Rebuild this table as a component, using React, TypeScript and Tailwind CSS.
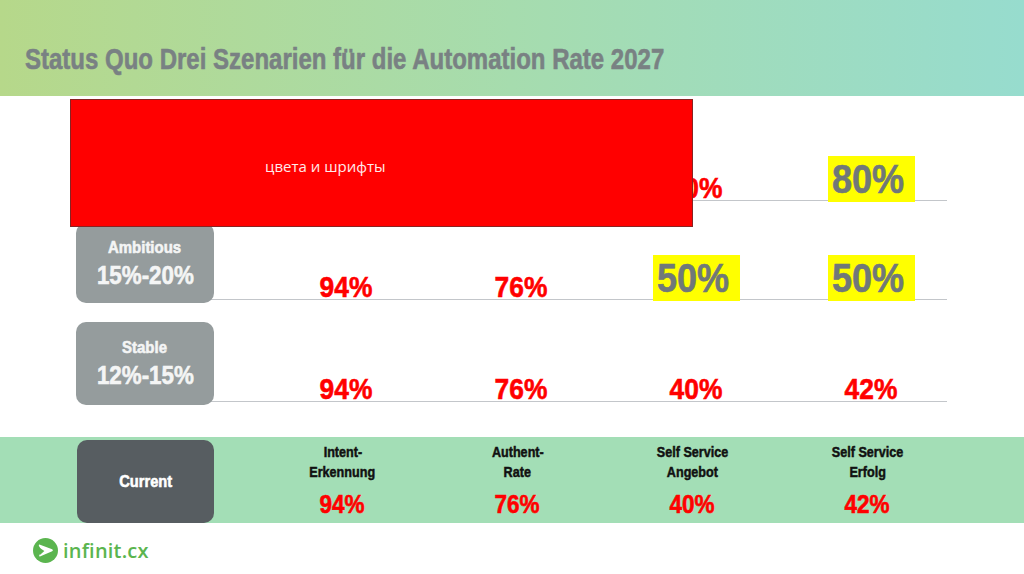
import React from 'react'

type Cell = { v: string; hi?: boolean }

// erste Zeile liegt unter dem roten Hinweisfeld
const rows: { name: string; range: string; h: string; cells: Cell[] }[] = [
  { name: '', range: '', h: 'h-[80px]', cells: [{ v: '' }, { v: '' }, { v: '40%' }, { v: '80%', hi: true }] },
  { name: 'Ambitious', range: '15%-20%', h: 'h-[80px]', cells: [{ v: '94%' }, { v: '76%' }, { v: '50%', hi: true }, { v: '50%', hi: true }] },
  { name: 'Stable', range: '12%-15%', h: 'h-[83px]', cells: [{ v: '94%' }, { v: '76%' }, { v: '40%' }, { v: '42%' }] },
]

const current = [
  { l1: 'Intent-', l2: 'Erkennung', v: '94%' },
  { l1: 'Authent-', l2: 'Rate', v: '76%' },
  { l1: 'Self Service', l2: 'Angebot', v: '40%' },
  { l1: 'Self Service', l2: 'Erfolg', v: '42%' },
]

function Logo() {
  return (
    <div className="flex items-center gap-[5px]">
      <svg width="25" height="25" viewBox="0 0 24 24">
        <circle cx="12" cy="12" r="12" fill="#5bb54f" />
        <path d="M5.6 7.4 Q5.4 6 6.8 6.4 L18.4 10.9 Q20 11.8 18.4 12.8 L7.2 17.6 Q5.6 18.2 6 16.6 L8.4 12.2 Z" fill="#fff" />
        <path d="M5.2 8.6 L10.9 12.4 L6.6 16.4 Z" fill="#5bb54f" />
      </svg>
      <span className="font-['Open_Sans',sans-serif] text-[20px] font-semibold leading-none tracking-[0.2px] text-[#5bb54f]">
        infinit.cx
      </span>
    </div>
  )
}

const heavy = 'font-bold leading-none [-webkit-text-stroke:0.6px_currentColor]'

export default function App() {
  return (
    <div className="relative h-[574px] w-[1024px] overflow-hidden bg-white font-['Liberation_Sans',Arial,sans-serif]">
      {/* Kopfzeile */}
      <div className="flex h-[96px] items-center bg-linear-to-r from-[#b6d88a] via-[#a6dcae] to-[#97dcce] pl-[25px] pt-[21px]">
        <h1 className={`inline-block origin-left scale-x-[0.8] whitespace-nowrap text-[30px] text-[#798183] ${heavy}`}>
          Status Quo Drei Szenarien für die Automation Rate 2027
        </h1>
      </div>

      {/* Szenarien */}
      <div className="flex flex-col gap-[19px] pt-[28px]">
        {rows.map((r, idx) => (
          <div key={idx} className={`flex ${r.h} pl-[76px]`}>
            <div className="relative z-10 flex w-[138px] shrink-0 flex-col items-center justify-center gap-[6px] rounded-[10px] bg-[#959c9d] text-[#f4f5f5]">
              {r.name && <span className={`inline-block scale-x-[0.88] text-[17px] ${heavy}`}>{r.name}</span>}
              {r.range && <span className={`inline-block scale-x-[0.86] text-[26px] ${heavy}`}>{r.range}</span>}
            </div>
            <div className="mb-[3px] ml-[-6px] flex w-[739px] items-end border-b-[1.5px] border-[#c3c6ca] pl-[51px]">
              {r.cells.map((c, i) => (
                <div key={i} className="flex w-[175px] shrink-0 justify-center">
                  {c.hi ? (
                    <div className="mb-[-2px] flex h-[46px] w-[87px] items-center justify-center bg-[#ffff00] pr-[6px]">
                      <span className={`inline-block scale-x-[0.88] text-[41px] text-[#707879] ${heavy}`}>{c.v}</span>
                    </div>
                  ) : (
                    c.v && <span className={`mb-[-3px] inline-block scale-x-[0.88] text-[30px] text-[#ff0000] ${heavy}`}>{c.v}</span>
                  )}
                </div>
              ))}
            </div>
          </div>
        ))}
      </div>

      {/* Current */}
      <div className="mt-[32px] flex h-[86px] bg-[#a3deb6] pl-[77px]">
        <div className="flex h-[83px] w-[137px] shrink-0 items-center justify-center self-end rounded-[10px] bg-[#575d61]">
          <span className={`inline-block scale-x-[0.86] text-[17px] text-white ${heavy}`}>Current</span>
        </div>
        <div className="flex pl-[41px]">
          {current.map((c) => (
            <div key={c.l2} className="flex w-[175px] flex-col items-center pt-[5px]">
              <span className="inline-block scale-x-[0.84] text-[15px] font-bold leading-[20px] text-[#111] [-webkit-text-stroke:0.5px_currentColor]">{c.l1}</span>
              <span className="inline-block scale-x-[0.84] text-[15px] font-bold leading-[20px] text-[#111] [-webkit-text-stroke:0.5px_currentColor]">{c.l2}</span>
              <span className={`mt-[10px] inline-block scale-x-[0.9] text-[25px] text-[#ff0000] ${heavy}`}>{c.v}</span>
            </div>
          ))}
        </div>
      </div>

      <div className="mt-[15px] pl-[33px]">
        <Logo />
      </div>

      {/* Overlay */}
      <div className="absolute left-[70px] top-[99px] z-20 flex h-[128px] w-[623px] items-center border border-[#8a2222] bg-[#ff0000] pl-[194px] pt-[6px]">
        <span className="font-['Open_Sans',sans-serif] text-[15px] leading-none text-[#ffeaea]">цвета и шрифты</span>
      </div>
    </div>
  )
}
